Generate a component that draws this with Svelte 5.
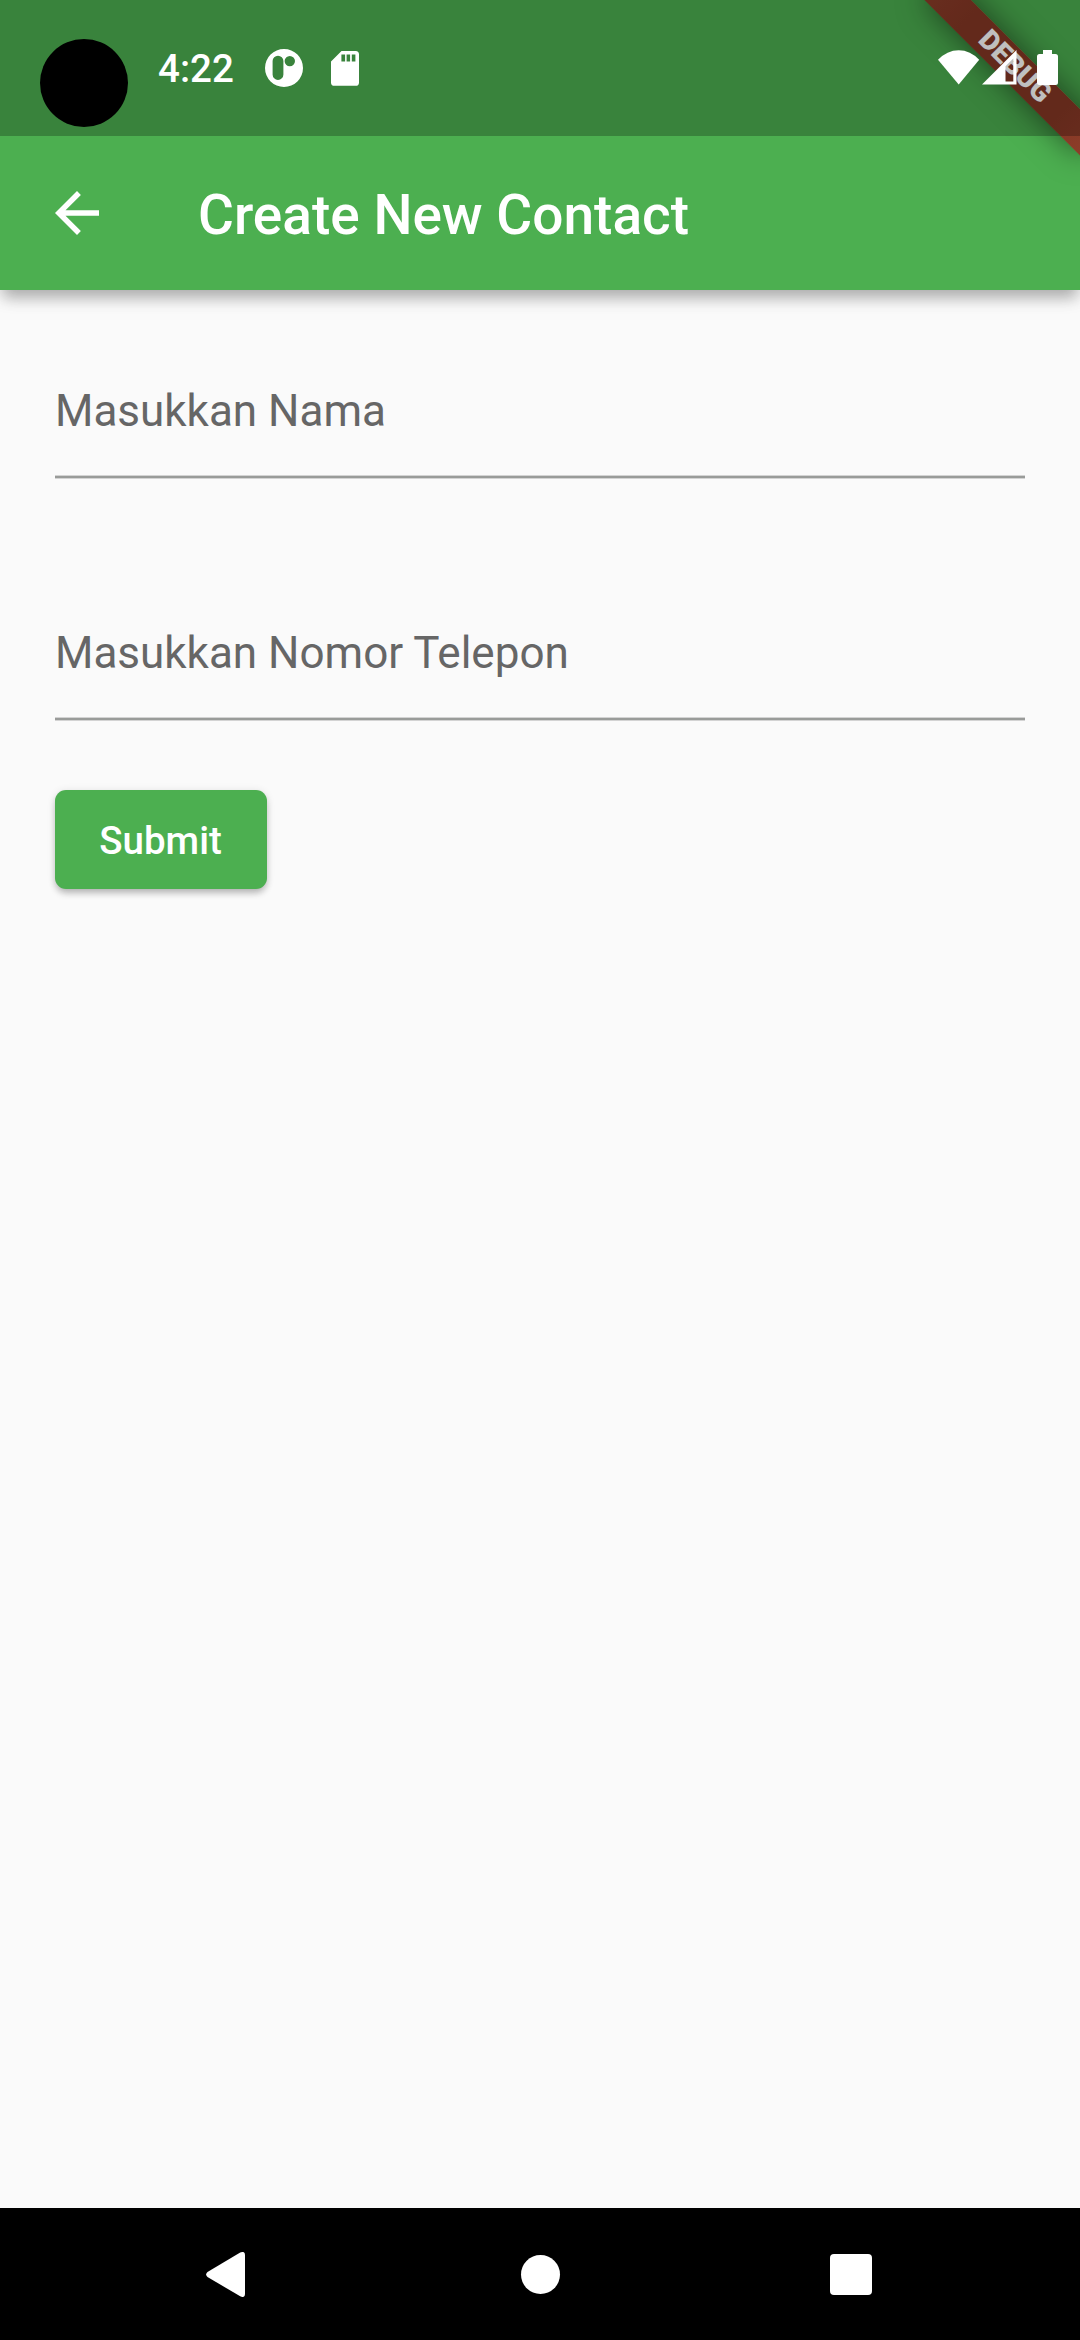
<script>
  let fields = $state([
    { id: 'name', label: 'Masukkan Nama', type: 'text', value: '' },
    { id: 'phone', label: 'Masukkan Nomor Telepon', type: 'tel', value: '' },
  ]);
</script>

<div class="screen">
  <div class="banner-clip" aria-hidden="true"><div class="banner">DEBUG</div></div>

  <header class="status">
    <span class="camera"></span>
    <span class="clock">4:22</span>
    <svg class="app-icon" viewBox="0 0 38 38">
      <path fill-rule="evenodd" d="M19 0a19 19 0 1 0 0 38a19 19 0 1 0 0-38zM13 6.7a5.4 5.4 0 0 1 5.4 5.4v13.4a5.4 5.4 0 0 1-10.8 0V12.1A5.4 5.4 0 0 1 13 6.7zM24.8 6.9a5.2 5.2 0 1 1 0 10.4a5.2 5.2 0 1 1 0-10.4z" />
    </svg>
    <svg class="sd" viewBox="0 0 28 35">
      <path fill-rule="evenodd" d="M10.5 0H24.7A3.4 3.4 0 0 1 28 3.4V31.4A3.4 3.4 0 0 1 24.7 34.8H3.4A3.4 3.4 0 0 1 0 31.4V10.5zM10.4 3.6v7h3.7v-7zM15.6 3.6v7h3.5v-7zM20.8 3.6v7h3.6v-7z" />
    </svg>
    <span class="spacer"></span>
    <svg class="wifi" viewBox="0 0 42 35"><path d="M0 9.8Q9 .2 20.7 .2T41.2 9.8L20.7 34.5z" /></svg>
    <svg class="signal" viewBox="0 0 35 35"><path fill-rule="evenodd" d="M0 34.5L34.5 0V34.5zM23.5 16.2V31.5H31.3V8.6z" /></svg>
    <svg class="battery" viewBox="0 0 21 35"><path d="M6 0h9v4h3.5A2.5 2.5 0 0 1 21 6.5v26a2.5 2.5 0 0 1-2.5 2.5h-16A2.5 2.5 0 0 1 0 32.5v-26A2.5 2.5 0 0 1 2.5 4H6z" /></svg>
  </header>

  <div class="appbar">
    <button class="back" aria-label="Back">
      <svg viewBox="0 0 24 24"><path d="M20 11H7.83l5.59-5.59L12 4l-8 8 8 8 1.41-1.41L7.83 13H20v-2z" /></svg>
    </button>
    <h1>Create New Contact</h1>
  </div>

  <main>
    <form onsubmit={(e) => e.preventDefault()}>
      {#each fields as field (field.id)}
        <div class="field">
          <label for={field.id} class:hidden={field.value}>{field.label}</label>
          <input id={field.id} type={field.type} bind:value={field.value} />
        </div>
      {/each}
      <button class="submit" type="submit">Submit</button>
    </form>
  </main>

  <nav>
    <svg class="nav-back" viewBox="0 0 39 45"><path d="M34.2 .6Q39 -1.5 39 3V42Q39 46.5 34.2 44.3L1.5 25Q-1.2 22.5 1.5 20z" /></svg>
    <span class="nav-home"></span>
    <span class="nav-recent"></span>
  </nav>
</div>

<style>
  :global(body) {
    margin: 0;
  }
  .screen {
    position: relative;
    display: flex;
    flex-direction: column;
    width: 1080px;
    height: 2340px;
    overflow: hidden;
    background: #fafafa;
    font-family: Roboto, sans-serif;
  }
  svg {
    display: block;
    fill: #fff;
  }
  .status {
    position: relative;
    z-index: 4;
    display: flex;
    box-sizing: border-box;
    flex: none;
    height: 136px;
    padding: 0 22px 0 40px;
    background: rgba(0, 0, 0, 0.25);
    color: #fff;
  }
  .camera {
    width: 88px;
    height: 88px;
    margin-top: 39px;
    border-radius: 50%;
    background: #000;
  }
  .clock {
    width: 77px;
    margin: 46px 0 0 30px;
    font-size: 38.5px;
    font-weight: 500;
    line-height: 46px;
  }
  .app-icon {
    width: 38px;
    height: 38px;
    margin: 49.3px 0 0 29.5px;
  }
  .sd {
    width: 28px;
    height: 35px;
    margin: 51px 0 0 28px;
  }
  .spacer {
    flex: 1;
  }
  .wifi {
    width: 42px;
    height: 35px;
    margin-top: 50px;
  }
  .signal {
    width: 35px;
    height: 35px;
    margin: 50.3px 0 0 2.4px;
  }
  .battery {
    width: 21px;
    height: 35px;
    margin: 50px 0 0 19.6px;
  }
  .appbar {
    position: relative;
    z-index: 1;
    display: flex;
    align-items: center;
    flex: none;
    box-sizing: border-box;
    height: 290px;
    margin-top: -136px;
    padding: 136px 0 0 44px;
    background: #4caf50;
    box-shadow: 0 11px 14px -3px rgba(0, 0, 0, 0.26), 0 3px 20px rgba(0, 0, 0, 0.1);
  }
  .back {
    width: 66px;
    height: 66px;
    padding: 0;
    border: 0;
    background: none;
  }
  h1 {
    margin: 4px 0 0 88px;
    color: #fff;
    font-size: 55px;
    font-weight: 500;
    line-height: 64px;
  }
  .banner-clip {
    position: absolute;
    z-index: 2;
    top: 0;
    right: 0;
    width: 240px;
    height: 240px;
    overflow: hidden;
  }
  .banner {
    position: absolute;
    top: 77px;
    left: 130px;
    box-sizing: border-box;
    width: 220px;
    height: 33px;
    padding-left: 2px;
    transform: rotate(45deg);
    transform-origin: 110px -77px;
    background: linear-gradient(90deg, #8c3d29, #853725 20%, #853725 80%, #8c3d29);
    box-shadow: 0 0 30px rgba(0, 0, 0, 0.5);
    color: #fff;
    font-size: 28px;
    font-weight: 900;
    line-height: 32px;
    text-align: center;
  }
  main {
    flex: 1;
    padding: 55px;
  }
  form {
    display: flex;
    flex-direction: column;
    align-items: flex-start;
  }
  .field {
    display: grid;
    align-items: center;
    width: 970px;
    height: 133px;
    margin-bottom: 109px;
  }
  .field:nth-of-type(2) {
    margin-bottom: 70px;
  }
  label {
    grid-area: 1 / 1;
    height: 52px;
    padding-bottom: 2px;
    color: #666;
    font-size: 44px;
    line-height: 52px;
  }
  label.hidden {
    visibility: hidden;
  }
  input {
    grid-area: 1 / 1;
    box-sizing: border-box;
    width: 100%;
    height: 133px;
    padding: 0;
    border: 0;
    border-bottom: 2px solid #999b99;
    border-radius: 0;
    outline: 0;
    background: none;
    box-shadow: 0 1px 0 #d3d3d3, inset 0 -1px 0 #d3d3d3;
    font: 44px Roboto, sans-serif;
  }
  .submit {
    width: 212px;
    height: 99px;
    padding: 2px 1px 0 0;
    border: 0;
    border-radius: 11px;
    background: #4caf50;
    box-shadow: 0 5px 7px -1px rgba(0, 0, 0, 0.24), 0 1px 9px rgba(0, 0, 0, 0.1);
    color: #fff;
    font: 500 38.5px/46px Roboto, sans-serif;
  }
  nav {
    position: relative;
    display: flex;
    align-items: center;
    box-sizing: border-box;
    flex: none;
    height: 132px;
    padding: 1px 0 0 206px;
    background: #000;
  }
  .nav-back {
    width: 39px;
    height: 45px;
  }
  .nav-home {
    width: 39px;
    height: 39px;
    margin-left: 276px;
    border-radius: 50%;
    background: #fff;
  }
  .nav-recent {
    width: 41.5px;
    height: 41.5px;
    margin-left: 270px;
    border-radius: 4px;
    background: #fff;
  }
</style>
